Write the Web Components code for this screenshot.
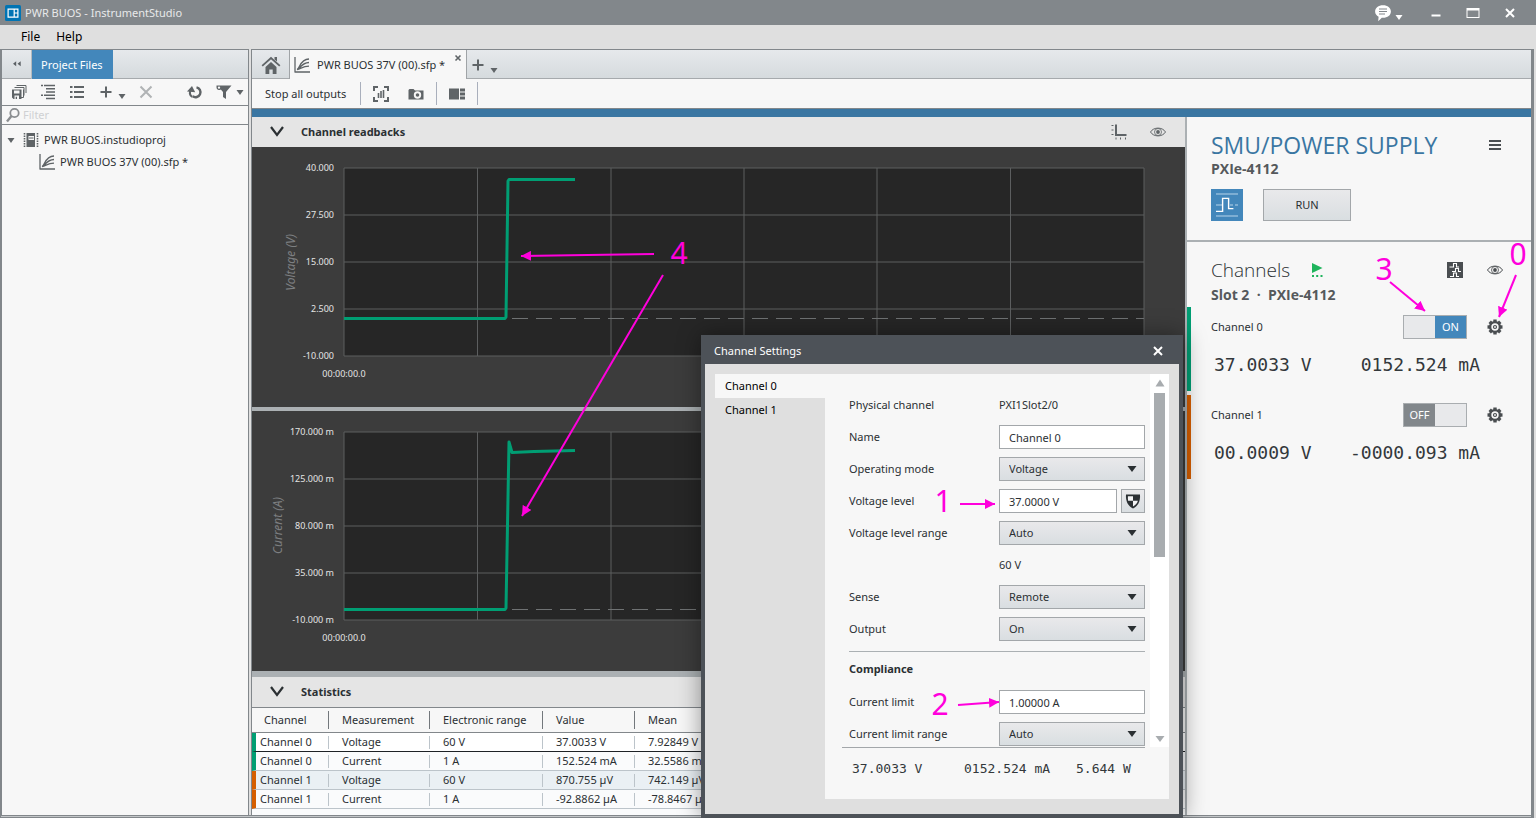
<!DOCTYPE html>
<html lang="en">
<head>
<meta charset="utf-8">
<title>PWR BUOS - InstrumentStudio</title>
<style>
  html, body { margin: 0; height: 100%; }
  body { font-family: "Noto Sans", "Open Sans", sans-serif; font-size: 11px; line-height: 16px; color: #2b3033; background: #dfdfdf; overflow: hidden; }
</style>
</head>
<body>
<app-window></app-window>
<script>
const define = (name, css, html) => {
  const template = document.createElement('template');
  customElements.define(name, class extends HTMLElement {
    constructor() {
      super();
      template.innerHTML = `<style>*{box-sizing:border-box}button{font:inherit;color:inherit;background:none;border:0;padding:0;margin:0}${css}</style>` +
        (typeof html === 'function' ? '' : html);
      this.attachShadow({ mode: 'open' }).append(template.content.cloneNode(true));
    }
    connectedCallback() {
      if (typeof html === 'function' && !this.built) {
        this.built = true;
        const part = document.createElement('template');
        part.innerHTML = html(this);
        this.shadowRoot.append(part.content.cloneNode(true));
      }
    }
  });
};

const gearTeeth = [0, 45, 90, 135, 180, 225, 270, 315]
  .map(a => `<rect x="6.300" y="0.500" width="3.400" height="3" transform="rotate(${a} 8 8)"/>`).join('');

const ICONS = {
  app: '<rect width="16" height="16" rx="1.5" fill="#0074b4"/><g fill="none" stroke="#fff" stroke-width="1.2"><path d="M3.1 4.1h9.8v8H3.1zM9.2 4v8M9.2 8h3.6"/></g>',
  chat: '<path d="M8 .2c4.600 0 7.900 2.500 7.900 6.300S12.600 12.800 8 12.800l-1.200-.1L3.200 16.300 3.600 11.800C1.500 10.600.1 8.800.1 6.500.1 2.700 3.400.2 8 .2z" fill="#fff"/><path d="M4 4h8M4 6.500h8M4 9h6" stroke="#82878b"/>',
  down: '<path d="M4.500 6h7L8 11z"/>',
  up: '<path d="M3.500 11.500h9L8 4.500z"/>',
  dropdown: '<path d="M3.500 5h9L8 11z"/>',
  minimise: '<path d="M3.500 9.500h9v2h-9z"/>',
  maximise: '<path d="M1.500 3h13v10h-13zM2.500 5.500v6.500h11V5.500z" fill-rule="evenodd"/>',
  close: '<path d="M4 4l8 8M12 4l-8 8" fill="none" stroke="currentColor" stroke-width="2"/>',
  remove: '<path d="M2.500 2.500l11 11M13.500 2.500l-11 11" fill="none" stroke="currentColor" stroke-width="2"/>',
  tiny: '<path d="M5.500 5.500l5 5M10.500 5.500l-5 5" fill="none" stroke="currentColor" stroke-width="1.600"/>',
  collapse: '<path d="M7.200 5.200v5L4 7.700zM11.700 5.200v5L8.500 7.700z"/>',
  saveall: '<path d="M5.500 1.500h9.500v7.500M3.500 3.500h9.500v8M10 13.500h2.500V5.500" fill="none" stroke="currentColor"/><path d="M1 5.500h9.500v9.500H2.500L1 13.500zM3 6.500v3h5.500v-3zM3.500 11.500v3.500h1.200v-2.300h1.300v2.300h2v-3.500z" fill-rule="evenodd"/>',
  tree: '<path d="M1 1.500h2M4 1.500h11M6 4.800h9M6 8h9M4 11.300h11M1 11.300h2M6 14.500h9" fill="none" stroke="currentColor" stroke-width="1.500"/>',
  list: '<path d="M1 3h2.500M5 3h10M1 8h2.500M5 8h10M1 13h2.500M5 13h10" fill="none" stroke="currentColor" stroke-width="2"/>',
  plus: '<path d="M8 2.500v11M2.500 8h11" fill="none" stroke="currentColor" stroke-width="2"/>',
  refresh: '<path d="M5.600 12.300A5 5 0 1 0 9.500 3.300" fill="none" stroke="currentColor" stroke-width="2.400"/><path d="M5.200 12.800C2.500 11.500 2.300 8 3.800 6" fill="none" stroke="currentColor" stroke-width="2.200"/><path d="M0 7.500L5 2l3.200 6.200z"/>',
  filter: '<path d="M.5 1.500h15l-5.500 6.500v7l-3-2V8L4.800 5.500A2.700 2.700 0 0 1 .5 3.400zM3 2.400a1.200 1.200 0 1 0 0 2.400 1.200 1.200 0 0 0 0-2.400z" fill-rule="evenodd"/>',
  search: '<circle cx="9.500" cy="6" r="4.200" fill="none" stroke="currentColor" stroke-width="1.800"/><path d="M6.500 9L2 14.500" fill="none" stroke="currentColor" stroke-width="2.400"/>',
  project: '<path d="M3.500 1h8.500v14H3.500zM5.500 4v4h5.500V4z" fill-rule="evenodd"/><path d="M6 6h4.500" stroke="currentColor"/><path d="M1.500 1v14M14.500 1v14" stroke="currentColor" stroke-dasharray="1.500 1" stroke-width="1.600" fill="none"/>',
  curve: '<path d="M1 0v15M.5 15h15.500M3 12.500C6 11 6 2.500 15 2M3 12.500C7 11 7 6 15 5.500M3 12.500C7 12 8 9.500 15 9.200" fill="none" stroke="currentColor" stroke-width="1.300"/>',
  home: '<path d="M8 5l5.500 5V17H9.700v-4.500H6.300V17H2.500V10z"/><path d="M-.8 8.800L8 1l8.800 7.800" fill="none" stroke="currentColor" stroke-width="1.800"/><path d="M11.500 0h2.500v4.500l-2.500-2z"/>',
  fit: '<path d="M5 1H1v4M11 1h4v4M5 15H1v-4M11 15h4v-4" fill="none" stroke="currentColor" stroke-width="2"/><path d="M5.500 7v5M8 5v7M10.500 4v8" fill="none" stroke="currentColor" stroke-width="1.600"/>',
  camera: '<path d="M1.500 3h4l1.500 1.500h8.500V13.500h-15V4zM9.500 5.300a3.700 3.700 0 1 0 0 7.400 3.700 3.700 0 0 0 0-7.400zm0 1.900a1.800 1.800 0 1 1 0 3.600 1.800 1.800 0 0 1 0-3.600z" fill-rule="evenodd"/>',
  layout: '<path d="M0 2.500h10v11H0zM11 2.500h5v3h-5zM11 6.500h5v3h-5zM11 10.500h5v3h-5z"/>',
  chevron: '<path d="M2 3l6 8 6-8" fill="none" stroke="currentColor" stroke-width="2.200"/>',
  axis: '<path d="M5 .5v10.500h10.500" fill="none" stroke="currentColor" stroke-width="2"/><path d="M.5 1.500h2M.5 6h2M.5 10.500h2M5 13.500v2M9.500 13.500v2M14.500 13.500v2" stroke="currentColor" fill="none"/>',
  eye: '<path d="M.5 8C3.500 2.800 12.500 2.800 15.500 8c-3 5.200-12 5.200-15 0z" fill="none" stroke="currentColor"/><circle cx="8" cy="8" r="3.500" fill="none" stroke="currentColor" stroke-width=".8"/><circle cx="8" cy="8" r="1.900"/>',
  menu: '<path d="M2 4h12M2 8h12M2 12h12" fill="none" stroke="currentColor" stroke-width="2"/>',
  pulse: '<path d="M2.500 2.500h11M2.500 13.500h11M2.500 8h3M9.500 8h1.500M12 8h1.500" stroke="#b8d4ea" stroke-width=".5" fill="none"/><path d="M2.500 11.200h3.300V4.700h3V9.800h2.400" stroke="#fff" stroke-width=".7" fill="none"/>',
  signals: '<path d="M0 0h16v16H0z"/><path d="M2.500 5h4V1.500h3V5H12M5 9.500h3.500v-3h3v3H14M3 14.500h3.500v-3.500h3v3.500H12" stroke="#fff" stroke-width="1.100" fill="none"/>',
  play: '<path d="M3 1l10.500 5L3 11z"/><path d="M3 13h2v2H3zM7.200 13h2v2h-2zM11.500 13h2v2h-2z"/>',
  gear: `${gearTeeth}<path d="M8 1.900a6.100 6.100 0 1 0 0 12.200 6.100 6.100 0 0 0 0-12.200zm0 2.400a3.700 3.700 0 1 1 0 7.400 3.700 3.700 0 0 1 0-7.400z" fill-rule="evenodd"/><circle cx="8" cy="8" r="1.500" fill="none" stroke="currentColor" stroke-width="1.200"/>`,
  shield: '<path d="M1 1.500h14c.5 7-2 11.500-7 14-5-2.500-7.500-7-7-14z"/><path d="M8 3.200v4.600H3.100C2.900 6.500 2.800 5 2.900 3.200zM8 7.800h4.900c-.7 2.600-2.200 4.300-4.900 5.700z" fill="#f4f4f5"/>'
};

define('ui-icon', `
  :host { display: inline-block; width: 16px; height: 16px; flex: none; }
  :host([size="32"]) { width: 32px; height: 32px; }
  svg { display: block; width: 100%; height: 100%; fill: currentColor; overflow: visible; }`,
  el => `<svg viewBox="0 0 16 16" aria-hidden="true">${ICONS[el.getAttribute('name')]}</svg>`);

define('title-bar', `
  :host { display: flex; align-items: center; height: 25px; padding: 0 18px 0 5px; background: #82878b; color: #e8e9ea; }
  h1 { margin: 0 auto 0 4px; font-size: 11px; font-weight: 400; }
  button { display: flex; color: #fff; margin-left: 21px; }
  button ui-icon + ui-icon { margin-top: 4px; }
  button:first-of-type { height: 16px; }`, `
  <ui-icon name="app"></ui-icon><h1>PWR BUOS - InstrumentStudio</h1>
  <button aria-label="Feedback"><ui-icon name="chat"></ui-icon><ui-icon name="down"></ui-icon></button>
  <button aria-label="Minimise"><ui-icon name="minimise"></ui-icon></button>
  <button aria-label="Maximise"><ui-icon name="maximise"></ui-icon></button>
  <button aria-label="Close"><ui-icon name="close"></ui-icon></button>`);

define('menu-bar', `
  :host { display: flex; align-items: center; height: 24px; padding: 0 21px; gap: 16px; color: #000; background: #dfdfdf; }
  button { font-size: 12px; }`, `<button>File</button><button>Help</button>`);

define('project-panel', `
  :host { display: flex; flex-direction: column; width: 248px; flex: none; border: 1px solid #82878b; border-width: 1px 1px 0; background: #f7f7f7; }
  .tabs { display: flex; height: 29px; background: linear-gradient(#e6e9ec, #d5dadd); border-bottom: 1px solid #a6aaad; }
  .fold { width: 29px; color: #5b6064; display: flex; align-items: center; justify-content: center; }
  .tab { height: 29px; padding: 0 10px 0 9px; background: #4387bb; color: #fff; border-left: 1px solid #b6babd; }
  .tools { display: flex; align-items: center; height: 27px; padding: 0 0 0 9px; border-bottom: 1px solid #82878b; color: #5f6467; }
  .tools button { display: flex; margin-right: 13px; }
  .tools button.add { align-items: flex-end; margin-right: 8px; }
  .add ui-icon + ui-icon { margin-bottom: -4px; }
  .tools .off { color: #b0b3b5; }
  .tools .gap { margin-left: auto; }
  .tools button:last-child { margin-right: 0; }
  .filter { display: flex; align-items: center; height: 19px; padding: 0 3px; gap: 2px; border-bottom: 1px solid #82878b; color: #8a8d90; }
  input { flex: 1; min-width: 0; border: 0; padding: 0; background: none; outline: 0; font: inherit; }
  input::placeholder { color: #cfd1d3; opacity: 1; }
  ul { list-style: none; margin: 4px 0 0; padding: 0; }
  li { display: flex; align-items: center; height: 22px; gap: 4px; padding-left: 1px; }
  li span { padding-left: 1px; }
  li ui-icon { color: #5f6467; }
  li.child { padding-left: 37px; }`, `
  <div class="tabs"><button class="fold" aria-label="Collapse"><ui-icon name="collapse"></ui-icon></button><button class="tab">Project Files</button></div>
  <div class="tools">
    <button aria-label="Save all"><ui-icon name="saveall"></ui-icon></button>
    <button aria-label="Tree view"><ui-icon name="tree"></ui-icon></button>
    <button aria-label="List view"><ui-icon name="list"></ui-icon></button>
    <button class="add" aria-label="Add"><ui-icon name="plus"></ui-icon><ui-icon name="down"></ui-icon></button>
    <button class="off" aria-label="Remove"><ui-icon name="remove"></ui-icon></button>
    <button class="gap" aria-label="Refresh"><ui-icon name="refresh"></ui-icon></button>
    <button aria-label="Filter options"><ui-icon name="filter"></ui-icon><ui-icon name="down"></ui-icon></button>
  </div>
  <label class="filter"><ui-icon name="search"></ui-icon><input type="text" placeholder="Filter" aria-label="Filter"></label>
  <ul>
    <li><ui-icon name="down"></ui-icon><ui-icon name="project"></ui-icon><span>PWR BUOS.instudioproj</span></li>
    <li class="child"><ui-icon name="curve"></ui-icon><span>PWR BUOS 37V (00).sfp *</span></li>
  </ul>`);

define('document-tabs', `
  :host { display: flex; height: 29px; background: linear-gradient(#e6e9ec, #d5dadd); box-shadow: inset 0 -1px #a6aaad; color: #5f6467; }
  .home { width: 37px; display: flex; align-items: center; justify-content: center; }
  .doc { position: relative; display: flex; align-items: center; width: 178px; padding-left: 4px; gap: 7px; background: #f7f7f7; border: solid #a0a4a7; border-width: 0 1px; color: #2b3033; white-space: nowrap; }
  .doc ui-icon { color: #5f6467; }
  .x { position: absolute; right: 0; top: 0; }
  .add { display: flex; align-items: center; padding-left: 3px; }
  .add ui-icon + ui-icon { margin-bottom: -10px; }`, `
  <button class="home" aria-label="Home"><ui-icon name="home"></ui-icon></button>
  <div class="doc"><ui-icon name="curve"></ui-icon><span>PWR BUOS 37V (00).sfp *</span><button class="x" aria-label="Close tab"><ui-icon name="tiny"></ui-icon></button></div>
  <button class="add" aria-label="New tab"><ui-icon name="plus"></ui-icon><ui-icon name="down"></ui-icon></button>`);

define('output-toolbar', `
  :host { display: flex; align-items: center; height: 30px; padding-left: 13px; background: #f7f7f7; border-bottom: 1px solid #82878b; color: #5f6467; }
  .stop { color: #2b3033; padding-right: 2px; }
  .group { display: flex; align-items: center; gap: 19px; height: 23px; margin-left: 12px; padding-left: 12px; border-left: 1px solid #a9afbc; }
  .group button { display: flex; }
  .end { padding: 0; }`, `
  <button class="stop">Stop all outputs</button>
  <div class="group"><button aria-label="Fit"><ui-icon name="fit"></ui-icon></button><button aria-label="Snapshot"><ui-icon name="camera"></ui-icon></button></div>
  <div class="group"><button aria-label="Layout"><ui-icon name="layout"></ui-icon></button></div>
  <div class="group end"></div>`);

define('section-header', `
  :host { display: flex; align-items: center; height: 30px; flex: none; padding: 0 19px 0 17px; background: #e5e5e5; color: #5f6467; }
  button { display: flex; color: #2b3033; }
  h2 { margin: 0 auto 0 16px; font-size: 11px; font-weight: 700; color: #2b3033; }
  .extra { display: flex; gap: 23px; }`, `
  <button aria-label="Collapse section"><ui-icon name="chevron"></ui-icon></button><h2><slot></slot></h2><div class="extra"><slot name="extra"></slot></div>`);

define('readback-chart', `
  :host { display: block; flex: 1; min-height: 0; background: #3c3c3c; color: #e4e4e4; font-size: 9px; line-height: 14px; }
  .frame { display: grid; height: 100%; grid-template-columns: 92px 1fr 41px; grid-template-rows: 1fr 30px; padding: 21px 0; }
  .left { display: flex; justify-content: flex-end; align-items: center; gap: 5px; padding-right: 10px; min-height: 0; }
  .axis { writing-mode: vertical-rl; transform: rotate(180deg); font-size: 12px; font-style: italic; color: #7c7f81; }
  ol { list-style: none; margin: -7px 0; padding: 0; align-self: stretch; display: flex; flex-direction: column; justify-content: space-between; text-align: right; }
  svg { display: block; width: 100%; height: 100%; overflow: visible; min-height: 0; }
  svg * { vector-effect: non-scaling-stroke; fill: none; }
  .bg { fill: #262626; stroke: #5c5e5f; }
  .grid { stroke: #5c5e5f; }
  .zero { stroke: #6f7273; stroke-dasharray: 16 8; }
  .trace { stroke: #009e73; stroke-width: 3; stroke-linejoin: round; }
  time { grid-column: 2; justify-self: start; transform: translateX(-50%); margin-top: 11px; }`,
  el => {
    const zero = el.getAttribute('zero');
    return `<div class="frame"><div class="left"><span class="axis">${el.getAttribute('axis')}</span>
    <ol>${el.getAttribute('ticks').split(',').map(t => `<li>${t}</li>`).join('')}</ol></div>
    <svg viewBox="0 0 800 188" preserveAspectRatio="none"><path class="bg" d="M0 0H800V188H0Z"/>
    <path class="grid" d="M0 47H800M0 94H800M0 141H800M133.500 0V188M267 0V188M400 0V188M533 0V188M666.500 0V188"/>
    <path class="zero" d="M0 ${zero}H800"/><path class="trace" d="${el.getAttribute('trace')}"/></svg>
    <time>00:00:00.0</time></div>`;
  });

define('statistics-table', `
  :host { display: block; background: #fafbfc; height: 108px; overflow: hidden; }
  table { width: 100%; table-layout: fixed; border-collapse: separate; border-spacing: 0; }
  th, td { text-align: left; font-weight: 400; padding: 0 0 0 13px; white-space: nowrap; }
  th { height: 26px; background: linear-gradient(#73787c, #73787c) right / 1px 18px no-repeat #f7f7f7; border-top: 1px solid #82878b; border-bottom: 1px solid #82878b; }
  td { height: 19px; line-height: 16px; border-bottom: 1px solid #bcc4ca; background: linear-gradient(#bcc4ca, #bcc4ca) right / 1px 13px no-repeat; }
  th:first-child { padding-left: 12px; }
  td:first-child { padding-left: 4px; border-left: 4px solid var(--mark); }
  th:last-child, td:last-child { background-size: 0 0; }
  .c0 { --mark: #009e73; } .c1 { --mark: #d55e00; }
  tr.current { background: #fff; } tr.current td { border-bottom-color: #1e2226; } .alt { background: #eaf0f4; }
  col:nth-child(1) { width: 77px; } col:nth-child(2) { width: 101px; } col:nth-child(3) { width: 113px; } col:nth-child(4) { width: 92px; }`, `
  <table><colgroup><col><col><col><col><col></colgroup>
  <thead><tr><th>Channel</th><th>Measurement</th><th>Electronic range</th><th>Value</th><th>Mean</th></tr></thead>
  <tbody>
  <tr class="c0 current"><td>Channel 0</td><td>Voltage</td><td>60 V</td><td>37.0033 V</td><td>7.92849 V</td></tr>
  <tr class="c0"><td>Channel 0</td><td>Current</td><td>1 A</td><td>152.524 mA</td><td>32.5586 mA</td></tr>
  <tr class="c1 alt"><td>Channel 1</td><td>Voltage</td><td>60 V</td><td>870.755 µV</td><td>742.149 µV</td></tr>
  <tr class="c1"><td>Channel 1</td><td>Current</td><td>1 A</td><td>-92.8862 µA</td><td>-78.8467 µA</td></tr>
  </tbody></table>`);

define('channel-card', `
  :host { display: block; height: 84px; margin-bottom: 4px; padding: 8px 28px 0 20px; border-left: 4px solid var(--mark); color: #2b3033; }
  .head { display: flex; align-items: center; height: 24px; }
  .head span.name { margin-right: auto; }
  label { position: relative; display: grid; grid-template-columns: 1fr 1fr; width: 64px; height: 24px; border: 1px solid #a9adb0; background: #e8e9eb; line-height: 22px; text-align: center; color: #fff; }
  input { position: absolute; inset: 0; width: 100%; height: 100%; margin: 0; opacity: 0; }
  .on { grid-column: 2; background: #4387bb; } .off { background: #82878b; }
  button { display: flex; margin-left: 20px; color: #4a4e51; }
  .values { display: flex; height: 24px; margin: 14px 0 0 3px; align-items: center; font: 18px/24px "DejaVu Sans Mono", monospace; color: #33383b; }
  .values span + span { margin-left: auto; margin-right: 23px; }`,
  el => {
    const on = el.hasAttribute('on');
    return `<div class="head"><span class="name">${el.getAttribute('name')}</span>
    <label><input type="checkbox" role="switch" aria-label="${el.getAttribute('name')} output"${on ? ' checked' : ''}><span class="${on ? 'on' : 'off'}">${on ? 'ON' : 'OFF'}</span></label>
    <button aria-label="Settings"><ui-icon name="gear"></ui-icon></button></div>
    <div class="values"><span>${el.getAttribute('volts')}</span><span>${el.getAttribute('amps')}</span></div>`;
  });

define('smu-panel', `
  :host { display: block; width: 346px; flex: none; border-left: 2px solid #abb0b3; background: #f7f7f7; color: #4a4e51; }
  header { height: 125px; padding: 12px 28px 0 24px; border-bottom: 2px solid #abb0b3; }
  .row { display: flex; align-items: center; }
  h2 { margin: 0 auto 0 0; font-size: 23px; line-height: 32px; font-weight: 400; color: #3a76a2; font-family: "Open Sans", "Noto Sans", sans-serif; }
  h3 { margin: 0; font-family: "Open Sans", "Noto Sans", sans-serif; font-size: 14px; line-height: 16px; font-weight: 700; color: #55595c; }
  .row.actions { margin-top: 12px; gap: 20px; }
  button { display: flex; }
  .mode { background: #4387bb; }
  .run { width: 88px; height: 32px; align-items: center; justify-content: center; border: 1px solid #a3a7aa; background: linear-gradient(#e9e9eb, #d9dee1); color: #2b3033; }
  .channels { padding: 12px 28px 0 24px; }
  .channels h2 { margin-right: 19px; font-size: 19px; font-weight: 300; color: #2b3033; }
  .channels ui-icon[name="play"] { color: #1fb45c; margin-right: auto; }
  .channels button { margin-left: 24px; }
  .channels h3 { margin: 1px 0 4px; white-space: pre; }
  channel-card { --mark: #009e73; } channel-card + channel-card { --mark: #d55e00; }`, `
  <header><div class="row"><h2>SMU/POWER SUPPLY</h2><button aria-label="Menu"><ui-icon name="menu"></ui-icon></button></div>
  <h3>PXIe-4112</h3>
  <div class="row actions"><button class="mode" aria-label="Pulse mode"><ui-icon name="pulse" size="32"></ui-icon></button><button class="run">RUN</button></div></header>
  <div class="channels"><div class="row"><h2>Channels</h2><ui-icon name="play"></ui-icon>
  <button aria-label="Signals"><ui-icon name="signals"></ui-icon></button><button aria-label="Visibility"><ui-icon name="eye"></ui-icon></button></div>
  <h3>Slot 2  ·  PXIe-4112</h3></div>
  <channel-card name="Channel 0" on volts="37.0033 V" amps="0152.524 mA"></channel-card>
  <channel-card name="Channel 1" volts="00.0009 V" amps="-0000.093 mA"></channel-card>`);

define('settings-field', `
  :host { display: grid; grid-template-columns: 150px minmax(0, 1fr); align-items: center; height: 24px; margin-bottom: 8px; }
  .control { position: relative; display: flex; gap: 4px; }
  input, select { flex: 1; width: 100%; min-width: 0; height: 24px; margin: 0; padding: 0 9px; border: 1px solid #a3a7aa; border-radius: 0; outline: 0; font: inherit; color: inherit; background: #fff; }
  select { appearance: none; background: linear-gradient(#e9e9eb, #d9dee1); }
  .control > ui-icon { position: absolute; right: 5px; top: 4px; pointer-events: none; }
  button { width: 24px; height: 24px; flex: none; display: flex; align-items: center; justify-content: center; border: 1px solid #a3a7aa; background: linear-gradient(#e9e9eb, #d9dee1); }`,
  el => {
    const kind = el.getAttribute('kind'), value = el.getAttribute('value'), label = el.getAttribute('label') || '';
    if (kind === 'text') return `<span>${label}</span><span>${value}</span>`;
    const control = kind === 'select'
      ? `<select id="field"><option>${value}</option></select><ui-icon name="dropdown"></ui-icon>`
      : `<input id="field" type="text" value="${value}">`;
    return `<label for="field">${label}</label><div class="control">${control}${el.hasAttribute('guard') ? '<button aria-label="Limits"><ui-icon name="shield"></ui-icon></button>' : ''}</div>`;
  });

define('channel-settings', `
  :host { display: flex; flex-direction: column; background: #4d5258; padding: 0 4px 4px; box-shadow: 0 0 22px rgba(0, 0, 0, .4); }
  header { display: flex; align-items: center; height: 29px; padding: 2px 13px 0 9px; color: #fff; }
  h2 { margin: 0 auto 0 0; font-size: 11px; font-weight: 400; }
  header button { display: flex; }
  .body { flex: 1; min-height: 0; display: flex; padding: 10px 10px 15px; background: #dfdfdf; }
  nav { width: 110px; flex: none; color: #000; }
  nav button { display: block; width: 100%; height: 24px; padding-left: 10px; text-align: left; }
  nav .active { background: #f7f7f7; }
  .pane { flex: 1; min-width: 0; display: flex; flex-direction: column; background: #f7f7f7; }
  .scroll { flex: 1; min-height: 0; display: flex; }
  form { flex: 1; min-width: 0; overflow: hidden; padding: 19px 5px 0 24px; }
  h3 { margin: 0 0 13px; padding-top: 9px; border-top: 1px solid #abb0b3; font-size: 11px; line-height: 16px; font-weight: 700; }
  .group { padding-bottom: 2px; }
  .bar { width: 19px; background: #fff; display: flex; flex-direction: column; align-items: center; justify-content: space-between; padding-top: 1px; color: #a8acaf; }
  .thumb { width: 11px; height: 164px; margin: 2px 0 auto; background: #a8acaf; }
  footer { display: grid; grid-template-columns: 112px 112px 1fr; align-items: center; height: 52px; margin: 0 24px 0 17px; padding: 0 0 9px 10px; border-top: 1px solid #a3a7aa; font: 13px/20px "DejaVu Sans Mono", monospace; color: #33383b; white-space: nowrap; }`, `
  <header><h2>Channel Settings</h2><button aria-label="Close"><ui-icon name="close"></ui-icon></button></header>
  <div class="body">
    <nav><button class="active">Channel 0</button><button>Channel 1</button></nav>
    <div class="pane">
      <div class="scroll"><form>
        <div class="group">
        <settings-field kind="text" label="Physical channel" value="PXI1Slot2/0"></settings-field>
        <settings-field kind="input" label="Name" value="Channel 0"></settings-field>
        <settings-field kind="select" label="Operating mode" value="Voltage"></settings-field>
        <settings-field kind="input" label="Voltage level" value="37.0000 V" guard></settings-field>
        <settings-field kind="select" label="Voltage level range" value="Auto"></settings-field>
        <settings-field kind="text" value="60 V"></settings-field>
        <settings-field kind="select" label="Sense" value="Remote"></settings-field>
        <settings-field kind="select" label="Output" value="On"></settings-field>
        </div>
        <h3>Compliance</h3>
        <settings-field kind="input" label="Current limit" value="1.00000 A"></settings-field>
        <settings-field kind="select" label="Current limit range" value="Auto"></settings-field>
      </form>
      <div class="bar"><ui-icon name="up"></ui-icon><div class="thumb"></div><ui-icon name="dropdown"></ui-icon></div></div>
      <footer><span>37.0033 V</span><span>0152.524 mA</span><span>5.644 W</span></footer>
    </div>
  </div>`);

define('callout-layer', `
  :host { display: block; pointer-events: none; }
  svg { display: block; width: 100%; height: 100%; fill: #ff00dc; stroke: #ff00dc; }
  path { stroke-width: 2; fill: none; }
  marker path { fill: #ff00dc; stroke: none; }
  text { font-size: 30px; stroke: none; text-anchor: middle; }`, `
  <svg><defs><marker id="tip" viewBox="0 0 10 10" refX="10" refY="5" markerWidth="10" markerHeight="10" markerUnits="userSpaceOnUse" orient="auto"><path d="M0 0L10 5L0 10Z"/></marker></defs>
  <path marker-end="url(#tip)" d="M654 254L521 256"/><path marker-end="url(#tip)" d="M663 275L522 516"/>
  <path marker-end="url(#tip)" d="M1390 282L1425 311"/><path marker-end="url(#tip)" d="M1516 275L1499 317"/>
  <path marker-end="url(#tip)" d="M960 504L995 504"/><path marker-end="url(#tip)" d="M958 705L999 702"/>
  <text x="679" y="264">4</text><text x="1384" y="280">3</text><text x="1518" y="265">0</text><text x="943" y="512">1</text><text x="940" y="715">2</text></svg>`);

define('app-window', `
  :host { position: relative; display: flex; flex-direction: column; height: 100vh; background: #dfdfdf; }
  .work { flex: 1; min-height: 0; display: flex; gap: 2px; margin: 0 2px 0 0; padding: 0 0 3px 1px; border: 0 solid #82878b; border-right-width: 3px; box-shadow: inset 1px 0 #82878b, inset 0 -1px #82878b, inset 0 -2px #c3c6c8, inset 0 -3px #82878b; }
  .doc { flex: 1; min-width: 0; display: flex; flex-direction: column; border: 1px solid #82878b; border-width: 1px 0 0 1px; }
  .accent { height: 8px; flex: none; background: #3a76a2; }
  .content { flex: 1; min-height: 0; display: flex; }
  .main { flex: 1; min-width: 0; display: flex; flex-direction: column; }
  .split { height: 4px; flex: none; background: #abb0b3; }
  .split.wide { height: 6px; }
  channel-settings { position: absolute; top: 335px; right: 353px; bottom: 0; width: 482px; }
  callout-layer { position: absolute; inset: 0; }`, `
  <title-bar></title-bar><menu-bar></menu-bar>
  <div class="work"><project-panel></project-panel>
    <div class="doc"><document-tabs></document-tabs><output-toolbar></output-toolbar><div class="accent"></div>
      <div class="content">
        <div class="main">
          <section-header>Channel readbacks<ui-icon slot="extra" name="axis"></ui-icon><ui-icon slot="extra" name="eye"></ui-icon></section-header>
          <readback-chart axis="Voltage (V)" ticks="40.000,27.500,15.000,2.500,-10.000" zero="150.500" trace="M0 150.500H161L162 149L164 13L165 11.500H231"></readback-chart>
          <div class="split"></div>
          <readback-chart axis="Current (A)" ticks="170.000 m,125.000 m,80.000 m,35.000 m,-10.000 m" zero="177.500" trace="M0 177.500H161L162 176L165 10L168 20.500L190 19.500L231 18.500"></readback-chart>
          <div class="split wide"></div>
          <section-header>Statistics</section-header>
          <statistics-table></statistics-table>
        </div>
        <smu-panel></smu-panel>
      </div>
    </div>
  </div>
  <channel-settings></channel-settings>
  <callout-layer></callout-layer>`);
</script>
</body>
</html>
